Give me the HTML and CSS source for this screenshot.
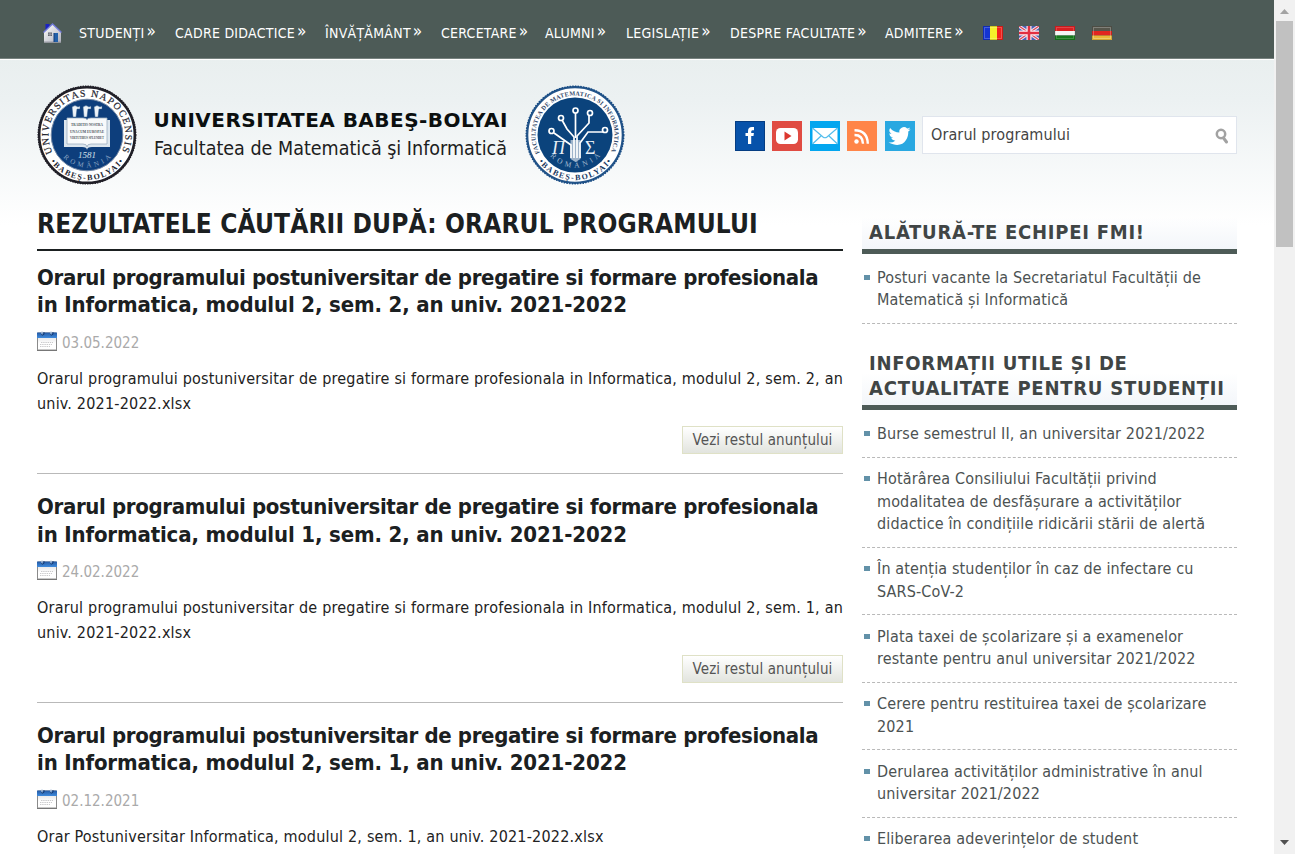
FILE: index.html
```html
<!DOCTYPE html>
<html lang="ro">
<head>
<meta charset="utf-8">
<title>Rezultatele căutării - Facultatea de Matematică și Informatică</title>
<link rel="stylesheet" href="styles.css">
</head>
<body>
<svg class="defs" width="0" height="0">
  <defs>
    <linearGradient id="wall" x1="0" y1="0" x2="1" y2="1"><stop offset="0" stop-color="#fff"/><stop offset="1" stop-color="#aeb0bc"/></linearGradient>
    <linearGradient id="blue" x1="0" y1="0" x2="0" y2="1"><stop offset="0" stop-color="#2459a4"/><stop offset="1" stop-color="#3f8bdd"/></linearGradient>
    <linearGradient id="sheet" x1="0" y1="0" x2="0" y2="1"><stop offset="0" stop-color="#d8d8da"/><stop offset=".6" stop-color="#fff"/></linearGradient>
    <symbol id="calendar" viewBox="0 0 20 20">
      <rect x=".5" y="2" width="19" height="17.500" rx=".8" fill="url(#sheet)" stroke="#8a8a8a"/>
      <path d="M0 1.500h20V7H0z" fill="url(#blue)"/>
      <path d="M0 19.300h20" stroke="#777" stroke-width="1.400"/>
      <path d="M4 11.500h12M3 13.500h12M3 15.500h10" stroke="#cacacc" stroke-width="1" stroke-dasharray="1.400 .8"/>
      <path d="M4 3.300q1.500 1.600 3 0V1.200M13 3.300q1.500 1.600 3 0V1.200" fill="none" stroke="#163a70" stroke-width="1"/>
      <path d="M5 0v3.300M14 0v3.300" stroke="#c8d8ea"/>
    </symbol>
  </defs>
</svg>
<div class="window">
  <div class="page">
    <nav class="nav">
      <a class="home"><svg width="19" height="20" viewBox="0 0 19 20"><path d="M2.500 1h4v6h-4z" fill="#1b22c4"/><path d="M1 8.500 9.500 1 18 8.500V19.500H1z" fill="url(#wall)"/><path d="M.5 9.500 9.500 1l9 8.500" fill="none" stroke="#6f78d8" stroke-width="1.300"/><path d="M1 19h17" stroke="#999aa4"/><path d="M5 9.500h4V13H5z" fill="#62666f"/><path d="M7 9.500V13M5 11.200h4" stroke="#b4b6bf" stroke-width=".7"/><path d="M11 10h4v9h-4z" fill="#2260aa"/><path d="M11 10v9" stroke="#153c79"/></svg></a>
      <a class="item w1">STUDENȚI<i>»</i></a>
      <a class="item w2">CADRE DIDACTICE<i>»</i></a>
      <a class="item w3">ÎNVĂȚĂMÂNT<i>»</i></a>
      <a class="item w4">CERCETARE<i>»</i></a>
      <a class="item w5">ALUMNI<i>»</i></a>
      <a class="item w6">LEGISLAȚIE<i>»</i></a>
      <a class="item w7">DESPRE FACULTATE<i>»</i></a>
      <a class="item w8">ADMITERE<i>»</i></a>
      <span class="flags">
        <svg width="20" height="14"><path d="M0 0h7v14H0z" fill="#1434d2"/><path d="M7 0h7v14H7z" fill="#f5ef2a"/><path d="M14 0h6v14h-6z" fill="#f0201c"/><path d="M1.500 1.500h17v11h-17z" fill="none" stroke="#fff" opacity=".22"/><path d="M.5.5h19v13H.5z" fill="none" stroke="#000" opacity=".15"/></svg>
        <svg width="20" height="14"><path d="M0 0h20v14H0z" fill="#4b5fb4"/><path d="m0 0 20 14M20 0 0 14" stroke="#f1e8f0" stroke-width="3.200"/><path d="m0 0 20 14M20 0 0 14" stroke="#df4758" stroke-width="1.200"/><path d="M10 0v14M0 7h20" stroke="#f8f0f4" stroke-width="5"/><path d="M10 0v14M0 7h20" stroke="#e22f40" stroke-width="2.600"/></svg>
        <svg width="20" height="14"><path d="M0 0h20v5H0z" fill="#d91f22"/><path d="M0 5h20v4.500H0z" fill="#f4f4f4"/><path d="M0 9.500h20V14H0z" fill="#17771d"/><path d="M1.500 1.500h17v11h-17z" fill="none" stroke="#fff" opacity=".18"/><path d="M.5.5h19v13H.5z" fill="none" stroke="#000" opacity=".08"/></svg>
        <svg width="20" height="14"><path d="M0 0h20v5H0z" fill="#56564c"/><path d="M0 5h20v4.500H0z" fill="#e12620"/><path d="M0 9.500h20V14H0z" fill="#e9b938"/><path d="M1.500 1.500h17v11h-17z" fill="none" stroke="#fff" opacity=".25"/><path d="M.5.5h19v13H.5z" fill="none" stroke="#000" opacity=".1"/></svg>
      </span>
    </nav>
    <header class="header">
      <svg class="logo" width="590" height="102" viewBox="0 0 590 102" role="img">
        <defs>
          <path id="t1" d="M15.700 67.500A38.500 38.500 0 1 1 84.300 67.500"/>
          <path id="t2" d="M14.800 68A39.500 39.500 0 1 1 85.200 68"/>
          <path id="b1" d="M13.500 76.500A45 45 0 0 0 86.500 76.500"/>
          <path id="r1" d="M22 67A33 33 0 0 0 78 67"/>
        </defs>
        <g class="seal">
          <circle cx="50" cy="50" r="47.800" fill="#fff" stroke="#201f27" stroke-width="2.500"/>
          <circle cx="50" cy="50" r="48.800" fill="none" stroke="#201f27" stroke-width="1.400" stroke-dasharray="1.500 1"/>
          <circle cx="50" cy="50" r="35.800" fill="#0d3e7c" stroke="#7086a4"/>
          <text class="ring" font-size="9.800" fill="#22232d" stroke="#22232d" stroke-width=".2"><textPath href="#t1" textLength="155">UNIVERSITAS NAPOCENSIS</textPath></text>
          <text class="ring bold" font-size="8" fill="#222530"><textPath href="#b1" textLength="85">•BABEȘ-BOLYAI•</textPath></text>
          <text class="ring" font-size="7" fill="#86a1c1"><textPath href="#r1" startOffset="7" textLength="53">ROMÂNIA</textPath></text>
          <path d="M27 35v27h18q5 0 5 3 0-3 5-3h18V35" fill="#dce6ee"/>
          <path d="M30 33h16q4 0 4 2 0-2 4-2h16v26H54q-4 0-4 3 0-3-4-3H30z" fill="#f8fafb" stroke="#9dafc1" stroke-width=".8"/>
          <g font-size="4.600" fill="#4c535d" class="ring bold"><text x="34" y="41" textLength="32" lengthAdjust="spacingAndGlyphs">TRADITIO NOSTRA</text><text x="33" y="47.500" textLength="34" lengthAdjust="spacingAndGlyphs">UNACUM EUROPAE</text><text x="33" y="54" textLength="34" lengthAdjust="spacingAndGlyphs">VIRTUTIBUS SPLENDET</text></g>
          <path d="M35 22q3-3 6 0l2-1v3h-3l-1 8h-3zM46 22q3-3 6 0l2-1v3h-3l-1 8h-3zM57 22q3-3 6 0l2-1v3h-3l-1 8h-3z" fill="#edf3f8" stroke="#315b8b" stroke-width=".5"/>
          <text class="ring" font-style="italic" x="41" y="73" font-size="9" textLength="18" lengthAdjust="spacingAndGlyphs" fill="#d5e0ea">1581</text>
        </g>
        <text class="uni" x="116.500" y="41.500" textLength="354">UNIVERSITATEA BABEŞ-BOLYAI</text>
        <text class="fac" x="117" y="70" textLength="353" lengthAdjust="spacingAndGlyphs">Facultatea de Matematică şi Informatică</text>
        <g class="seal" transform="translate(488)">
          <circle cx="50" cy="50" r="47.800" fill="#fff" stroke="#235489" stroke-width="2.200"/>
          <circle cx="50" cy="50" r="48.800" fill="none" stroke="#174b84" stroke-width="1.400" stroke-dasharray="1.500 1.200"/>
          <circle cx="50" cy="50" r="37.500" fill="#0b437c"/>
          <text class="ring bold" font-size="6.200" fill="#32486a"><textPath href="#t2" textLength="159">FACULTATEA DE MATEMATICA SI INFORMATICA</textPath></text>
          <text class="ring bold" font-size="8" fill="#17375f"><textPath href="#b1" textLength="85">•BABEȘ-BOLYAI•</textPath></text>
          <text class="ring" font-size="7.500" fill="#a2b9cf"><textPath href="#r1" startOffset="5" textLength="57">ROMÂNIA</textPath></text>
          <g fill="none" stroke="#fff" stroke-width="1.700"><path d="M46 73V60L29 48M49 73V52l-7-8-5-9M52 73V51l12-13v-7M55 73V58l8-11h15"/><circle cx="26.500" cy="46" r="2.500"/><circle cx="36" cy="33" r="2.500"/><circle cx="50.500" cy="25.500" r="2.500"/><path d="M50.500 28v25"/><circle cx="65" cy="28" r="2.500"/><circle cx="80" cy="45" r="2.500"/></g>
          <path d="M45.500 55h10v19l-5 3-5-3z" fill="#fff" opacity=".6"/>
          <text class="ring italic" x="27" y="69" font-size="18" fill="#e8eff6">Π</text><text class="ring" x="60" y="69" font-size="18" fill="#e8eff6">Σ</text>
        </g>
      </svg>
      <div class="tools">
        <div class="social">
          <svg width="30" height="30"><path d="M0 0h30v30H0z" fill="#0752aa"/><path d="M.5.5h29v29H.5z" fill="none" stroke="#053d82"/><path d="M13 23v-8h-2.500v-3H13v-2q0-4 4-4h2v3.200h-1.500q-1.300 0-1.300 1.500V12h2.700l-.4 3h-2.300v8z" fill="#fff"/></svg>
          <svg width="30" height="30"><path d="M0 0h30v30H0z" fill="#e04b42"/><rect x="4" y="7" width="22" height="16" rx="4.500" fill="#fff"/><path d="m12.500 10.500 7 4.500-7 4.500z" fill="#dc372f"/></svg>
          <svg width="30" height="30"><path d="M0 0h30v30H0z" fill="#03a6ef"/><path d="M2.500 7h25v16h-25z" fill="#fff"/><path d="m2.500 7 10.500 9q2 1.500 4 0l10.500-9M2.500 23l9-8.500M27.500 23l-9-8.500" fill="none" stroke="#53bdec" stroke-width="1.200"/></svg>
          <svg width="30" height="30"><path d="M0 0h30v30H0z" fill="#ff8548"/><circle cx="9.500" cy="20.500" r="2.200" fill="#fff"/><path d="M7.500 14q8.300 0 8.500 8.700M7.500 9.300q13 .3 13.300 13.400" fill="none" stroke="#fff" stroke-width="2.400"/></svg>
          <svg width="30" height="30"><path d="M0 0h30v30H0z" fill="#29a8e1"/><path transform="translate(3.500 4) scale(.96 .92)" d="M23 4.600a9 9 0 0 1-2.700.8A4.700 4.700 0 0 0 22.400 2.700a9 9 0 0 1-3 1.200 4.700 4.700 0 0 0-8 4.300A13.400 13.400 0 0 1 1.700 3.200a4.700 4.700 0 0 0 1.400 6.300A4.700 4.700 0 0 1 1 8.900a4.700 4.700 0 0 0 3.800 4.700 4.700 4.700 0 0 1-2.100.1 4.700 4.700 0 0 0 4.400 3.300A9.500 9.500 0 0 1 0 19c15 8 21-4 20.600-12q1.500-1 2.400-2.400z" fill="#fff"/></svg>
        </div>
        <div class="search"><span>Orarul programului</span><svg width="14" height="16" viewBox="0 0 14 16"><circle cx="6" cy="6" r="4.200" fill="none" stroke="#a2a2a2" stroke-width="2.500"/><path d="m8.500 10 3 4" stroke="#a2a2a2" stroke-width="3" stroke-linecap="round"/></svg></div>
      </div>
    </header>
    <div class="columns">
      <main class="main">
        <h1>REZULTATELE CĂUTĂRII DUPĂ: ORARUL PROGRAMULUI</h1>
        <article>
          <h2>Orarul programului postuniversitar de pregatire si formare profesionala<br>in Informatica, modulul 2, sem. 2, an univ. 2021-2022</h2>
          <div class="date"><svg width="20" height="20"><use href="#calendar"/></svg>03.05.2022</div>
          <p>Orarul programului postuniversitar de pregatire si formare profesionala in Informatica, modulul 2, sem. 2, an univ. 2021-2022.xlsx</p>
          <div class="more"><a>Vezi restul anunțului</a></div>
        </article>
        <article>
          <h2>Orarul programului postuniversitar de pregatire si formare profesionala<br>in Informatica, modulul 1, sem. 2, an univ. 2021-2022</h2>
          <div class="date"><svg width="20" height="20"><use href="#calendar"/></svg>24.02.2022</div>
          <p>Orarul programului postuniversitar de pregatire si formare profesionala in Informatica, modulul 2, sem. 1, an univ. 2021-2022.xlsx</p>
          <div class="more"><a>Vezi restul anunțului</a></div>
        </article>
        <article>
          <h2>Orarul programului postuniversitar de pregatire si formare profesionala<br>in Informatica, modulul 2, sem. 1, an univ. 2021-2022</h2>
          <div class="date"><svg width="20" height="20"><use href="#calendar"/></svg>02.12.2021</div>
          <p>Orar Postuniversitar Informatica, modulul 2, sem. 1, an univ. 2021-2022.xlsx</p>
        </article>
      </main>
      <aside class="side">
        <section>
          <h3>ALĂTURĂ-TE ECHIPEI FMI!</h3>
          <ul><li>Posturi vacante la Secretariatul Facultății de<br>Matematică și Informatică</li></ul>
        </section>
        <section>
          <h3>INFORMAȚII UTILE ȘI DE<br>ACTUALITATE PENTRU STUDENȚII</h3>
          <ul class="long">
            <li>Burse semestrul II, an universitar 2021/2022</li>
            <li>Hotărârea Consiliului Facultății privind<br>modalitatea de desfășurare a activităților<br>didactice în condițiile ridicării stării de alertă</li>
            <li>În atenția studenților în caz de infectare cu<br>SARS-CoV-2</li>
            <li>Plata taxei de școlarizare și a examenelor<br>restante pentru anul universitar 2021/2022</li>
            <li>Cerere pentru restituirea taxei de școlarizare<br>2021</li>
            <li>Derularea activităților administrative în anul<br>universitar 2021/2022</li>
            <li>Eliberarea adeverințelor de student</li>
          </ul>
        </section>
      </aside>
    </div>
  </div>
  <div class="scrollbar">
    <svg width="17" height="21"><path d="m4 14 4.500-5 4.500 5z" fill="#a3a3a3"/></svg>
    <div class="thumb"></div>
    <svg class="down" width="17" height="17"><path d="m4 3 4.500 5 4.500-5z" fill="#505050"/></svg>
  </div>
</div>
</body>
</html>
```
FILE: styles.css
```css
* { box-sizing: border-box; }
body {
  margin: 0;
  overflow: hidden;
  font-family: "DejaVu Sans Condensed", "DejaVu Sans", sans-serif;
  font-stretch: condensed;
  font-size: 16px;
  color: #222;
  background: #fff;
}
.defs { position: absolute; }
.window { display: flex; height: 854px; overflow: hidden; }
.page {
  width: 1274px;
  flex: none;
  background: linear-gradient(#e9efef 59px, #ecf1f2 100px, #fff 225px);
}
.nav {
  height: 59px;
  display: flex;
  align-items: center;
  padding: 8px 0 0 43px;
  background: #4d5b57;
  border-bottom: 1px solid #77827f;
  box-shadow: 0 1px #fff;
  color: #fff;
  font-size: 14px;
  letter-spacing: .26px;
  white-space: nowrap;
}
.home { width: 36px; }
.home svg { display: block; }
.item { flex: none; line-height: 18px; }
.item i { font-style: normal; font-size: 17px; line-height: 1; margin-left: 2px; position: relative; top: -1px; }
.w1 { width: 96px; }
.w2 { width: 150px; }
.w3 { width: 116px; }
.w4 { width: 104px; }
.w5 { width: 81px; }
.w6 { width: 104px; }
.w7 { width: 155px; }
.w8 { width: 98px; }
.flags { display: flex; gap: 16px; }
.flags svg:last-child { margin-left: 1px; }

.header { height: 150px; display: flex; padding: 26px 37px 0 37px; }
.logo { flex: none; }
.ring { font-family: "Liberation Serif", serif; }
.bold { font-weight: bold; }
.italic { font-style: italic; }
.uni { font: bold 20px "DejaVu Sans", sans-serif; fill: #0b0f0f; }
.fac { font: 20px "DejaVu Sans Condensed", "DejaVu Sans", sans-serif; fill: #1c2020; }
.tools { display: flex; margin: 31px 0 0 auto; }
.social { display: flex; gap: 7.4px; padding: 5px 7.400px 0 0; }
.search {
  width: 315px;
  height: 38px;
  display: flex;
  align-items: center;
  justify-content: space-between;
  padding: 0 7px 2px 8px;
  border: 1px solid #e0e5ed;
  background: #fff;
  color: #444;
  letter-spacing: .1px;
}
.search svg { margin-top: 4px; }

.columns { display: flex; gap: 19px; padding: 0 37px; }
.main { width: 806px; }
h1, h2, h3, p, ul { margin: 0; padding: 0; }
h1 {
  height: 42px;
  line-height: 30px;
  border-bottom: 2px solid #1b2021;
  font-size: 26px;
  letter-spacing: .14px;
  color: #1b2021;
  white-space: nowrap;
}
article {
  height: 228.750px;
  padding-top: 13px;
}
article:nth-of-type(n+2) { border-top: 1px solid #b9b9b9; padding-top: 19.250px; }
article:nth-of-type(1) { height: 222px; }
h2 {
  font-size: 22px;
  line-height: 27.300px;
  letter-spacing: -.15px;
  color: #1b2021;
  white-space: nowrap;
}
h2::first-line { letter-spacing: -.35px; }
.date {
  display: flex;
  align-items: center;
  gap: 5px;
  height: 22px;
  margin-top: 13.500px;
  color: #aaa;
  font-size: 15px;
}
.date svg { margin-top: -4px; }
article p { margin-top: 12px; line-height: 25px; letter-spacing: .2px; text-align: justify; }
.more { display: flex; justify-content: flex-end; margin-top: 9.500px; }
.more a {
  width: 161px;
  height: 28px;
  line-height: 27px;
  text-align: center;
  font-size: 15px;
  letter-spacing: .1px;
  color: #555;
  border: 1px solid #dfe1c6;
  background: linear-gradient(#fff, #e2e4de);
}
.side { width: 375px; padding-top: 8px; }
h3 {
  padding: 3px 7px 4px;
  border-bottom: 5px solid #4d5b57;
  font-size: 20px;
  letter-spacing: .75px;
  line-height: 25px;
  color: #404545;
  background: linear-gradient(#fff0, #f3f6fa) bottom / 100% 32px no-repeat;
  white-space: nowrap;
}
.side section { margin-bottom: 24px; }
ul { list-style: none; padding-top: 2px; }
.long { padding-top: 3px; }
li {
  position: relative;
  padding: 10.500px 0 11px 15px;
  border-bottom: 1px dashed #b9b9b9;
  line-height: 22.500px;
  color: #4c5252;
  letter-spacing: .14px;
  white-space: nowrap;
}
li::before {
  content: "";
  position: absolute;
  left: 2px;
  top: 18.500px;
  width: 6px;
  height: 5px;
  background: #6291a8;
}
.scrollbar {
  width: 21px;
  height: 854px;
  display: flex;
  flex-direction: column;
  padding: 0 2px;
  background: #f1f1f1;
}
.thumb { height: 226px; background: #c1c1c1; }
.down { margin-top: auto; }
```
